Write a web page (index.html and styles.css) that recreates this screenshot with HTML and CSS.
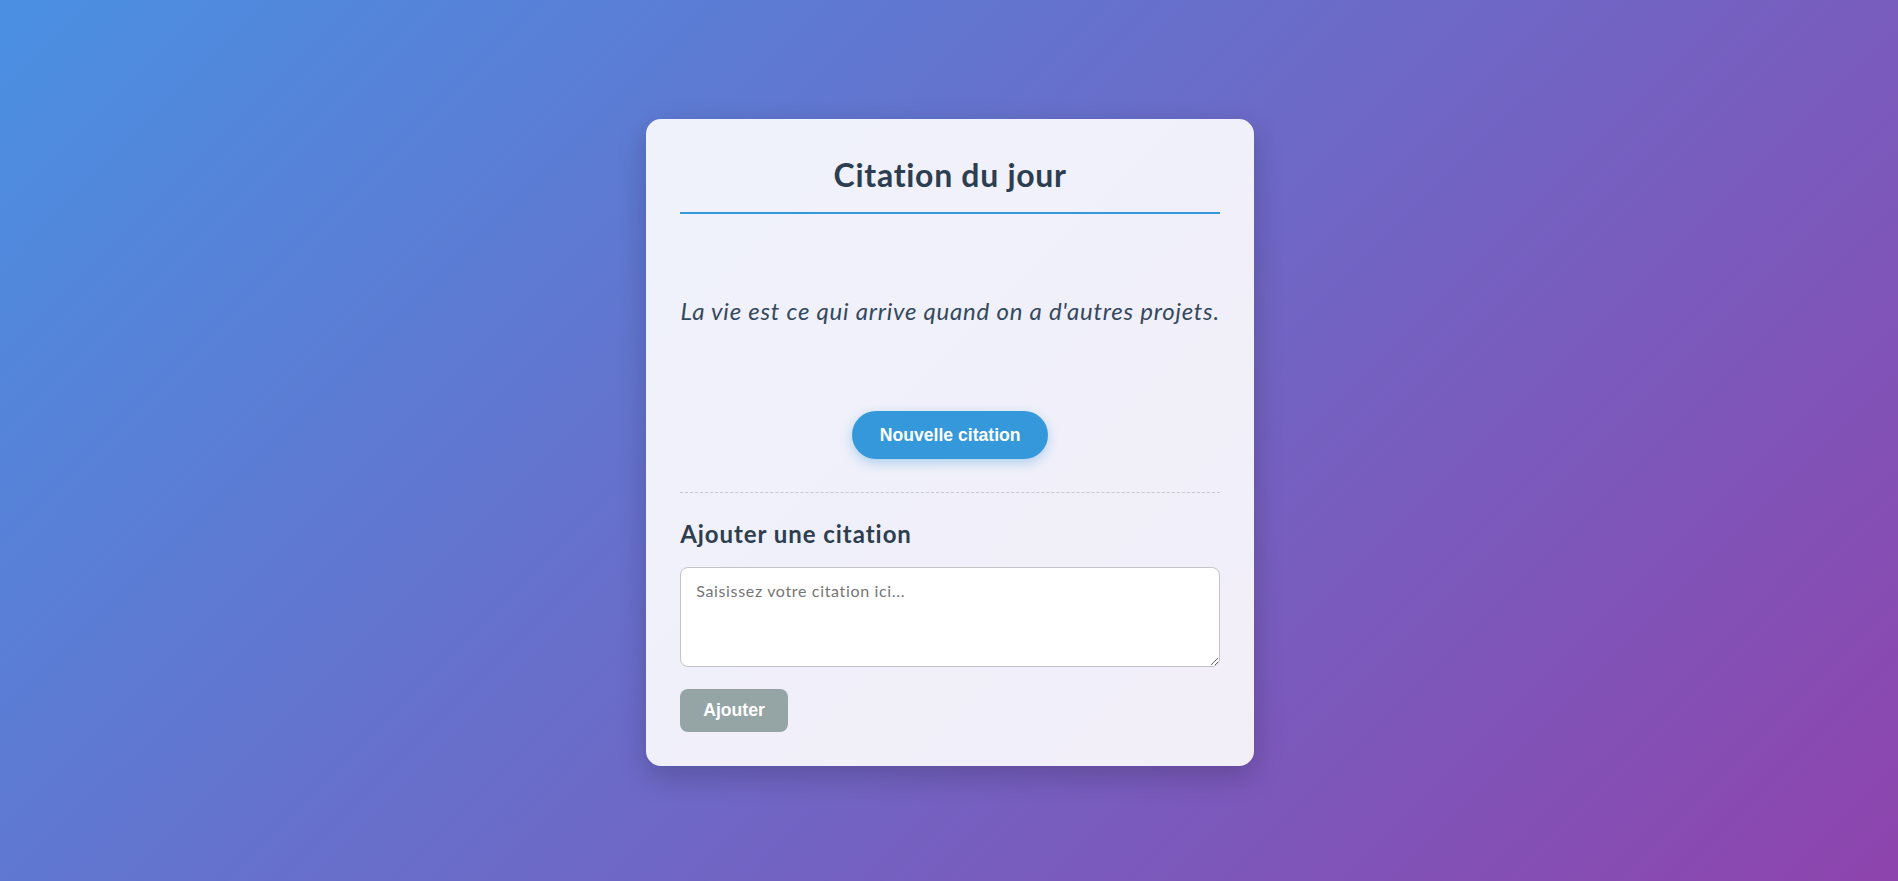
FILE: index.html
```html
<!DOCTYPE html>
<html lang="fr">
<head>
<meta charset="UTF-8">
<title>Citation du jour</title>
<link rel="stylesheet" href="styles.css">
</head>
<body>
  <main class="card">
    <h1 class="title">Citation du jour</h1>
    <p class="quote">La vie est ce qui arrive quand on a d'autres projets.</p>
    <div class="actions">
      <button class="btn-new" type="button">Nouvelle citation</button>
    </div>
    <section class="add">
      <h2 class="add-title">Ajouter une citation</h2>
      <textarea class="add-input" placeholder="Saisissez votre citation ici..."></textarea>
      <button class="btn-add" type="button">Ajouter</button>
    </section>
  </main>
</body>
</html>
```
FILE: styles.css
```css
* { box-sizing: border-box; }

html, body { height: 100%; }

body {
  margin: 0;
  padding: 4px 0 0 2.4px;
  min-height: 100vh;
  display: flex;
  align-items: center;
  justify-content: center;
  background: linear-gradient(135deg, #4a90e2, #8e44ad);
  font-family: "Segoe UI", Lato, "Noto Sans", sans-serif;
  font-variant-ligatures: none;
  color: #2c3e50;
}

.card {
  width: 608px;
  padding: 34px;
  background: rgba(255, 255, 255, 0.9);
  border-radius: 15px;
  box-shadow: 0 10px 30px rgba(0, 0, 0, 0.2);
  display: flex;
  flex-direction: column;
}

.title {
  margin: 0;
  font-size: 32px;
  line-height: 44px;
  font-weight: 700;
  letter-spacing: 0.7px;
  text-align: center;
  color: #2c3e50;
  padding-bottom: 15px;
  border-bottom: 2px solid #3498db;
}

.quote {
  margin: 78px 0 0;
  font-size: 24px;
  line-height: 38.4px;
  font-style: italic;
  letter-spacing: 0.76px;
  text-align: center;
  color: #34495e;
}

.actions {
  margin-top: 80.6px;
  display: flex;
  justify-content: center;
}

.btn-new {
  font-family: "Liberation Sans", Arial, sans-serif;
  font-size: 17.6px;
  font-weight: 700;
  line-height: 20.4px;
  color: #fff;
  background: #3498db;
  border: none;
  border-radius: 30px;
  padding: 13.6px 27.5px;
  box-shadow: 0 4px 12px rgba(52, 152, 219, 0.35);
  cursor: pointer;
}

.add {
  margin-top: 33.5px;
  border-top: 1px dashed #c8c8d0;
  padding-top: 27.3px;
  display: flex;
  flex-direction: column;
  align-items: flex-start;
}

.add-title {
  margin: 0;
  font-size: 24px;
  line-height: 28.8px;
  font-weight: 700;
  letter-spacing: 0.95px;
  color: #2c3e50;
}

.add-input {
  margin-top: 17.4px;
  width: 100%;
  height: 100.5px;
  padding: 12.4px 15px;
  border: 1px solid #c4c4c8;
  border-radius: 8px;
  background: #fff;
  font-family: inherit;
  font-size: 16px;
  line-height: 22px;
  letter-spacing: 0.66px;
  color: #2c3e50;
  resize: vertical;
}

.add-input::placeholder { color: #757575; }

.btn-add {
  margin-top: 22px;
  font-family: "Liberation Sans", Arial, sans-serif;
  font-size: 17.6px;
  font-weight: 700;
  line-height: 20.4px;
  color: #fff;
  background: #95a5a6;
  border: none;
  border-radius: 8px;
  padding: 11.3px 23px;
  cursor: pointer;
}
```
